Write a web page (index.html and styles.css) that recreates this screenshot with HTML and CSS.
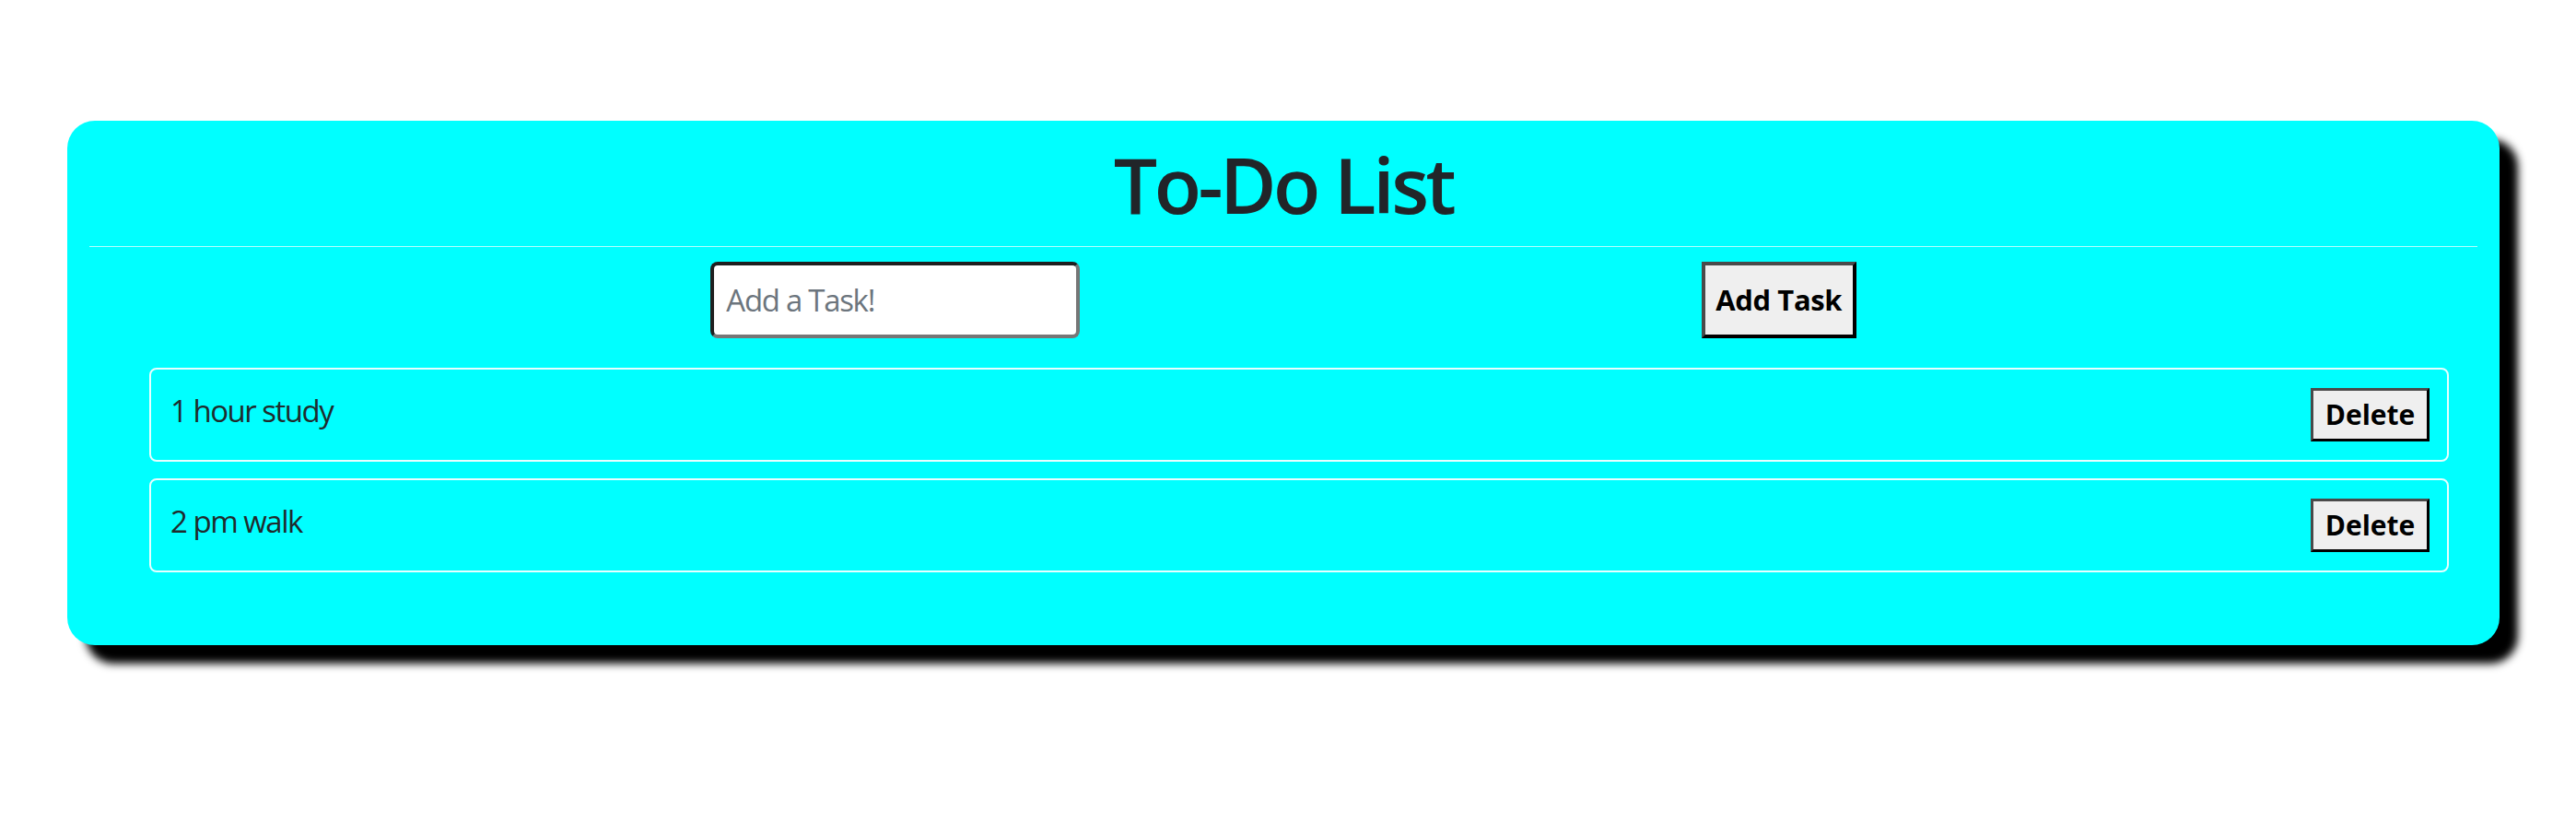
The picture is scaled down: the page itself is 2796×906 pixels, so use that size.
FILE: index.html
```html
<!DOCTYPE html>
<html lang="en">
<head>
<meta charset="utf-8">
<title>To-Do List</title>
<link rel="stylesheet" href="styles.css">
</head>
<body>
<div class="page">
  <div class="card">
    <h1 class="title">To-Do List</h1>
    <hr class="divider">
    <form class="add-row">
      <input class="task-input" type="text" placeholder="Add a Task!">
      <button class="add-btn" type="button">Add Task</button>
    </form>
    <ul class="tasks">
      <li class="task"><span class="task-text">1 hour study</span><button class="del-btn" type="button">Delete</button></li>
      <li class="task"><span class="task-text">2 pm walk</span><button class="del-btn" type="button">Delete</button></li>
    </ul>
  </div>
</div>
</body>
</html>
```

FILE: styles.css
```css
html, body {
  margin: 0;
  padding: 0;
  background: #ffffff;
}

.page {
  box-sizing: border-box;
  min-height: 906px;
  padding: 131px 83px 120px 73px;
  font-family: "Open Sans", "Noto Sans", sans-serif;
  color: #212529;
}

.card {
  background: #00ffff;
  border-radius: 30px;
  box-shadow: 20px 20px 10px #000000;
  padding: 19px 24px 24px;
}

.title {
  margin: 0 0 16px;
  text-align: center;
  font-size: 84px;
  font-weight: 600;
  line-height: 1.2;
  letter-spacing: -3.5px;
  color: #212529;
}

.divider {
  margin: 0 0 16px;
  border: 0;
  border-top: 1px solid rgba(255, 255, 255, 0.7);
  height: 0;
}

.add-row {
  display: flex;
  justify-content: space-evenly;
  align-items: center;
  margin: 0;
}

.task-input {
  box-sizing: border-box;
  width: 401px;
  height: 83px;
  border-style: solid;
  border-width: 4px;
  border-color: #1f1f1f #767676 #767676 #1f1f1f;
  border-radius: 8px;
  background: #ffffff;
  padding: 0 13px;
  font-family: "Open Sans", "Noto Sans", sans-serif;
  font-size: 33px;
  letter-spacing: -1.3px;
  color: #212529;
  outline: none;
}

.task-input::placeholder {
  color: #6c757d;
}

.add-btn {
  box-sizing: border-box;
  width: 168px;
  height: 83px;
  border-style: solid;
  border-width: 4px;
  border-color: #4a4a4a #000000 #000000 #4a4a4a;
  background: #efefef;
  font-family: "Open Sans", "Noto Sans", sans-serif;
  font-weight: 700;
  font-size: 31px;
  letter-spacing: -0.4px;
  color: #000000;
  padding: 0;
}

.tasks {
  list-style: none;
  margin: 32px 0 55px;
  padding: 0 31px 0 65px;
  display: flex;
  flex-direction: column;
  gap: 18px;
}

.task {
  display: flex;
  justify-content: space-between;
  align-items: flex-start;
  border: 2px solid rgba(255, 255, 255, 0.9);
  border-radius: 8px;
  padding: 20px 19px 20px 21px;
}

.task-text {
  padding-top: 3px;
  font-size: 33px;
  line-height: 1.362;
  letter-spacing: -1.5px;
  color: #1f2b2d;
}

.del-btn {
  box-sizing: border-box;
  width: 129px;
  height: 58px;
  border-style: solid;
  border-width: 3px;
  border-color: #4a4a4a #000000 #000000 #4a4a4a;
  background: #efefef;
  font-family: "Open Sans", "Noto Sans", sans-serif;
  font-weight: 700;
  font-size: 30px;
  color: #000000;
  padding: 0;
}
```
